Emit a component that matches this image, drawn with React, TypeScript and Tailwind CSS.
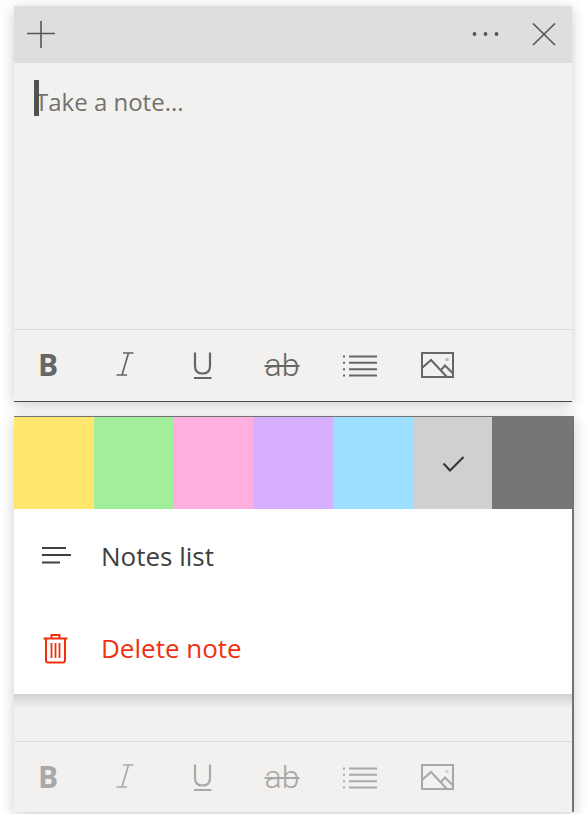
import type { ReactNode } from "react";

const swatches = [
  { name: "Yellow", color: "bg-[#ffe66e]" },
  { name: "Green", color: "bg-[#a1ef9b]" },
  { name: "Pink", color: "bg-[#ffafdf]" },
  { name: "Purple", color: "bg-[#d7afff]" },
  { name: "Blue", color: "bg-[#9edfff]" },
  { name: "Gray", color: "bg-[#d0d0d0]", selected: true },
  { name: "Charcoal", color: "bg-[#767676]" },
];

function ToolButton({ label, disabled, children }: { label: string; disabled?: boolean; children: ReactNode }) {
  return (
    <button type="button" aria-label={label} disabled={disabled} className="flex h-9 w-[34px] items-center justify-center">
      {children}
    </button>
  );
}

function Toolbar({ disabled }: { disabled?: boolean }) {
  return (
    <div
      className={`flex h-[71px] items-center gap-11 border-t border-[#dedddb] pl-[17px] ${
        disabled ? "text-[#a8a8a6]" : "text-[#666664]"
      }`}
    >
      <ToolButton label="Bold" disabled={disabled}>
        <span className="text-[30px] leading-8 font-bold">B</span>
      </ToolButton>
      <ToolButton label="Italic" disabled={disabled}>
        <svg width="34" height="36" viewBox="0 0 34 36" fill="none" stroke="currentColor" strokeWidth="1.700">
          <path d="M14 6h10.500M7.500 28h10.500M19.500 6l-6.500 22" />
        </svg>
      </ToolButton>
      <ToolButton label="Underline" disabled={disabled}>
        <svg width="34" height="36" viewBox="0 0 34 36" fill="none" stroke="currentColor" strokeWidth="2.200">
          <path d="M8 5.500v13.500c0 5 2.600 7.500 7.500 7.500s7.500-2.500 7.500-7.500V5.500M7 31h17.500" />
        </svg>
      </ToolButton>
      <ToolButton label="Strikethrough" disabled={disabled}>
        <span className="font-['Roboto','Open_Sans',sans-serif] text-[32px] leading-9 font-light line-through decoration-2">ab</span>
      </ToolButton>
      <ToolButton label="Bulleted list" disabled={disabled}>
        <svg width="34" height="36" viewBox="0 0 34 36" fill="none" stroke="currentColor" strokeWidth="2">
          <path d="M6 9.500h28M6 15.800h28M6 22.200h28M6 28.500h28" />
          <path d="M0 9.500h2M0 15.800h2M0 22.200h2M0 28.500h2" />
        </svg>
      </ToolButton>
      <ToolButton label="Add image" disabled={disabled}>
        <svg width="34" height="36" viewBox="2 0 34 36" fill="none" stroke="currentColor" strokeWidth="2">
          <rect x="3" y="6" width="31" height="24" />
          <path d="M3 21l9-8L27.500 29.500M21.500 23.500l4.500-5 8 8" />
          <path d="M26.500 12.500h3" strokeOpacity=".4" strokeWidth="3" />
        </svg>
      </ToolButton>
    </div>
  );
}

export default function App() {
  return (
    <main className="flex flex-col gap-[14px] overflow-hidden bg-white pt-[6px] pb-[2px] pl-[14px] font-['Open_Sans','Noto_Sans',sans-serif]">
      <section className="mr-[15px] flex flex-col border-b border-[#4a483c] bg-[#f2f1ef] pb-px shadow-[0_3px_14px_rgba(0,0,0,0.2)]">
        <header className="flex h-[57px] items-center bg-[#dfdedd] pr-4 pl-[13px] text-[#555]">
          <button type="button" aria-label="New note">
            <svg width="28" height="28" viewBox="0 0 28 28" fill="none" stroke="currentColor" strokeWidth="1.6">
              <path d="M0 12.500h28M14 -1v28" />
            </svg>
          </button>
          <button type="button" aria-label="Menu" className="ml-auto">
            <svg width="28" height="24" viewBox="0 0 28 24" fill="currentColor">
              <circle cx="2.500" cy="11" r="1.900" />
              <circle cx="13.500" cy="11" r="1.900" />
              <circle cx="24.500" cy="11" r="1.900" />
            </svg>
          </button>
          <button type="button" aria-label="Close note" className="ml-8">
            <svg width="24" height="24" viewBox="0 0 24 24" fill="none" stroke="currentColor" strokeWidth="1.600">
              <path d="M1 0.500l22 21.500M23 0.500l-22 21.500" />
            </svg>
          </button>
        </header>
        <div className="relative flex">
          <textarea
            aria-label="Note text"
            placeholder="Take a note..."
            className="h-[266px] w-full resize-none bg-transparent px-[21px] py-[21px] text-[24px] leading-9 text-[#333] outline-none placeholder:text-[#72716f]"
          />
          <span className="absolute top-[17px] left-5 h-9 w-[5px] bg-[#505450]" />
        </div>
        <Toolbar />
      </section>

      <section className="mr-[13px] flex flex-col border-t border-r-2 border-[#737373] bg-[#f2f1ef] shadow-[0_3px_14px_rgba(0,0,0,0.2)]">
        <div className="flex h-[92px]">
          {swatches.map((s) => (
            <button key={s.name} type="button" aria-label={s.name} className={`flex flex-1 items-center justify-center ${s.color}`}>
              {s.selected && (
                <svg width="24" height="20" viewBox="0 0 24 20" fill="none" stroke="#333" strokeWidth="2">
                  <path d="M3.500 10.500l6.500 7L23.500 4" />
                </svg>
              )}
            </button>
          ))}
        </div>
        <div className="flex flex-col bg-white text-[26px] leading-9">
          <button type="button" className="flex h-[93px] items-center gap-[30px] pl-7 text-[#404040]">
            <svg width="29" height="20" viewBox="0 0 29 20" fill="none" stroke="currentColor" strokeWidth="2">
              <path d="M0 2h24M0 9h29M0 16.500h18" />
            </svg>
            <span>Notes list</span>
          </button>
          <button type="button" className="flex h-[92px] items-center gap-[30px] pl-7 text-[#f03010]">
            <svg width="29" height="32" viewBox="0 0 29 32" fill="none" stroke="currentColor" strokeWidth="2">
              <path d="M1.500 6.500h24M4 7v21.500c0 1.300 0.500 2 2 2h15c1.500 0 2-0.700 2-2V7" />
              <path d="M9.500 6V3h8v3" />
              <path d="M9.500 11v15M13.500 11v15M17.500 11v15" strokeWidth="1.800" />
            </svg>
            <span>Delete note</span>
          </button>
        </div>
        <div className="h-[14px] bg-linear-to-b from-[#d2d1d0] to-[#f2f1ef]" />
        <div className="h-[33px]" />
        <Toolbar disabled />
      </section>
    </main>
  );
}
